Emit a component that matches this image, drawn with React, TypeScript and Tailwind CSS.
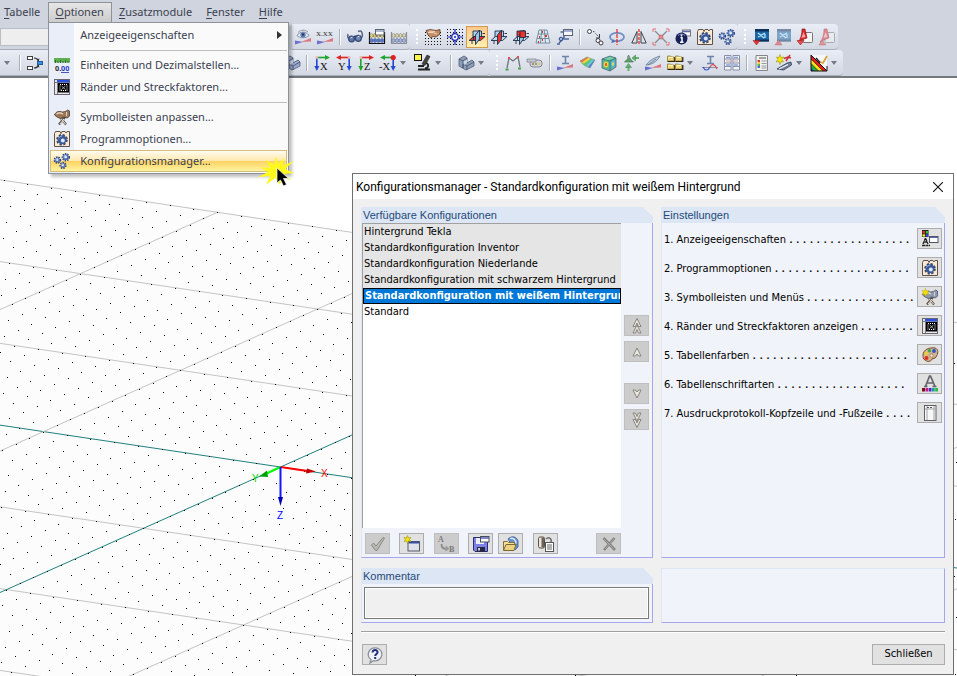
import type { ReactNode } from "react";

/* ---------- icon helpers ---------- */

function Icon({ children, className = "size-4" }: { children: ReactNode; className?: string }) {
  return (
    <svg viewBox="0 0 16 16" className={`shrink-0 overflow-visible ${className}`} fill="none" aria-hidden="true">
      {children}
    </svg>
  );
}

function Gear({ x, y, r, fill = "#4f70b5" }: { x: number; y: number; r: number; fill?: string }) {
  return (
    <g>
      <circle cx={x} cy={y} r={r} stroke="#2c447e" strokeWidth="2" strokeDasharray="1.4 .9" />
      <circle cx={x} cy={y} r={r - 0.3} fill={fill} />
      <circle cx={x - 0.4} cy={y - 0.5} r={r * 0.55} fill="#a9bfe8" />
      <circle cx={x} cy={y} r={r * 0.28} fill="#fff" />
    </g>
  );
}

const GearsIcon = () => (
  <Icon>
    <Gear x={3.4} y={7} r={2.8} />
    <Gear x={11.8} y={4.2} r={3.2} />
    <Gear x={9} y={12.4} r={2.6} />
  </Icon>
);

const ProgramIcon = () => (
  <Icon>
    <path d="M.5 15.500V2.500l1-2h4.500l1 2 1-2h3l1 1.500 1-1.500h2.500v15z" fill="#fbe9d2" stroke="#5d5148" />
    <circle cx="8" cy="8.800" r="4.800" stroke="#33466f" strokeWidth="2" strokeDasharray="2.200 1.570" />
    <circle cx="8" cy="8.800" r="4.500" fill="#3c5a98" />
    <path d="M4.500 7.500A4 4 0 018 5" stroke="#8fabdf" />
    <circle cx="8.800" cy="9.400" r="2" fill="#dbe7fa" />
  </Icon>
);

const MarginsIcon = () => (
  <Icon>
    <rect x=".5" y=".5" width="15" height="15" fill="#e8e8ea" stroke="#6a6570" />
    <rect x="3" y="1" width="12" height="2.500" fill="#2a50e0" />
    <path d="M1 3.500h2M3.500 3v12" stroke="#777" />
    <rect x="4" y="3.800" width="11" height="9.700" fill="#000" />
    <rect x="6" y="5.500" width="7" height="6" stroke="#fff" strokeDasharray="1 1" />
    <path d="M7.500 7l4 3.500M11.500 7l-4 3.500" stroke="#ccc" strokeWidth=".8" />
  </Icon>
);

const UnitsIcon = () => (
  <Icon>
    <rect x="0" y="1" width="16" height="4.500" fill="#5fae52" />
    <path d="M1.500 3v3M4 4v2M6.500 3v3M9 4v2M11.500 3v3M14 4v2" stroke="#2c6b2a" />
    <text x="1" y="14" fontSize="7.500" fontWeight="700" fontFamily="Liberation Sans, sans-serif" fill="#222">
      0.
    </text>
    <text x="7" y="14" fontSize="7.500" fontWeight="700" fontFamily="Liberation Sans, sans-serif" fill="#1f2fc0">
      00
    </text>
    <path d="M7 15.500h8" stroke="#1f2fc0" strokeWidth=".8" />
  </Icon>
);

const HammerIcon = ({ star = false }: { star?: boolean }) => (
  <Icon>
    <path d="M11 8l-6 7.500M6 8l6 7.500" stroke="#5d5045" strokeWidth="2.200" />
    <path d="M6.500 9l5 6M10 10l-4 5" stroke="#f1efe9" strokeWidth="1" />
    <path
      d="M.500 6c1.500-4 5-4 8-3 2 0 4-1 5-2l2 1v5l-2 2-4-1-3 1.500L3 8z"
      fill={star ? "#8d97ad" : "#9b7758"}
      stroke={star ? "#4c556c" : "#4c3a2c"}
      strokeWidth=".8"
    />
    <path d="M2.500 5c2-1.500 5-1 6.500 0" stroke={star ? "#dde2ee" : "#efe0cf"} strokeWidth="1.300" />
    <path d="M12.500 3v4" stroke="#d9d3cc" />
    {star && <path d="M3.500-.5l1 2.500 2.500-.5-1.500 2 1.500 2-2.500-.5-1 2.500-1-2.500-2.500.5 1.500-2-1.500-2 2.500.5z" fill="#f6e100" stroke="#a39500" strokeWidth=".4" />}
  </Icon>
);

const Wedge = () => (
  <>
    <path d="M0 15.500v-4l8 1.500z" fill="#6b6fd0" />
    <path d="M16 9v3.500L6 13z" fill="#dd7780" />
  </>
);

const EyeIcon = () => (
  <Icon>
    <Wedge />
    <path d="M2 6.500C5 2 11 2 14 6.500 11 9.500 5 9.500 2 6.500z" fill="#e5ecf6" stroke="#7585a5" strokeWidth=".9" />
    <circle cx="8" cy="5.800" r="2.600" fill="#5677a8" />
    <circle cx="8" cy="5.600" r="1" fill="#1e2c4a" />
    <path d="M3 3.500C6 .5 10 .5 13 3" stroke="#8f98aa" />
  </Icon>
);

const DecimalsIcon = () => (
  <Icon>
    <Wedge />
    <text x="-1" y="7" fontSize="7" fontWeight="700" fontFamily="Liberation Serif, serif" fill="#555">
      X.XX
    </text>
  </Icon>
);

const GlassesIcon = () => (
  <Icon>
    <path d="M1 5c-1 3 0 4 1 5M11 2.500c4-2 5 2 4 6" stroke="#59657f" strokeWidth="1.500" />
    <circle cx="4.500" cy="10" r="2.900" fill="#5f79ad" stroke="#3a4c77" strokeWidth="1.300" />
    <circle cx="11.300" cy="9.300" r="3" fill="#6d86b8" stroke="#3a4c77" strokeWidth="1.300" />
    <path d="M7 8c1-1 1-1 2-.5" stroke="#2b3d68" strokeWidth="1.500" />
    <path d="M3.500 9l2-1M10.500 8l2-1" stroke="#d9e4f7" />
  </Icon>
);

const AbacusIcon = ({ active = false }: { active?: boolean }) => (
  <Icon>
    <path d="M.5 3v12M15.500 3v12M0 14.500h16M.5 7h15" stroke={active ? "#111" : "#8a8f98"} strokeWidth="1.200" />
    {[2.5, 6, 9.5, 13].map((x) => (
      <g key={x}>
        <ellipse cx={x} cy="6.500" rx="1.500" ry="2" fill={active ? "#e9d984" : "#dcd8c0"} stroke="#77704a" strokeWidth=".5" />
        <ellipse cx={x} cy="11.500" rx="1.700" ry="2" fill={active ? "#5b77c4" : "#a8b5d3"} stroke="#4b5d8c" strokeWidth=".5" />
      </g>
    ))}
    {active && (
      <>
        <rect x="6.500" y=".5" width="8.500" height="5.500" fill="#fff" stroke="#5d6070" />
        <path d="M7 2h8" stroke="#5b6f9f" />
      </>
    )}
  </Icon>
);

const DotField = ({ from = 0 }: { from?: number }) => (
  <g fill="#111">
    {[0, 1, 2, 3, 4, 5].filter((r) => r >= from).map((r) =>
      [0, 1, 2, 3, 4, 5].map((c) => <rect key={`${r}-${c}`} x={c * 3} y={r * 3} width="1" height="1" />),
    )}
  </g>
);

const HandGridIcon = () => (
  <Icon>
    <DotField from={1} />
    <path d="M1 1.500l4-1 6 1 4-1V5l-4 3-3-.5L6 9 3 6z" fill="#c48f68" stroke="#5c3b27" strokeWidth=".8" />
    <path d="M3 3.500h5l4 1.500M4 2l6 .5" stroke="#f3d5bb" />
  </Icon>
);

const SnapIcon = () => (
  <Icon>
    <DotField />
    <path d="M8 0v16M0 8h16" stroke="#1b27b4" strokeWidth="1.200" />
    <circle cx="8" cy="8" r="3.300" fill="#eef2ff" stroke="#1b27b4" strokeWidth="1.300" />
    <circle cx="8" cy="8" r="1" fill="#1b27b4" />
  </Icon>
);

const PlaneIcon = ({ plane }: { plane: "xy" | "yz" | "xz" }) => {
  const red = "#f0302a";
  return (
    <Icon>
      <g stroke="#1d2f47" strokeWidth=".9" strokeLinejoin="round">
        <path d="M4 2h8.500v7.500H4z" fill={plane === "xz" ? red : "#a9d0ec"} />
        <path d="M0 11.500l4.500-4H16l-4.500 4z" fill={plane === "xy" ? red : "#bfdcf1"} />
        <path d="M6.500 6l4-5v9l-4 5.500z" fill={plane === "yz" ? red : "#9cc6e6"} />
        {plane === "xz" && <path d="M7 2h5.500v6.500H7z" fill={red} />}
        {plane !== "yz" && <path d="M4.500 11.500v-4h2v4z" fill={plane === "xy" ? red : "#d7eaf8"} />}
        <path d="M3 15v-3.500M13.500 4.500H16" />
      </g>
    </Icon>
  );
};

const MeshIcon = () => (
  <Icon>
    <path d="M4 1h8l3 13H1z" fill="#dceaf1" />
    <path d="M4 1h8M3 5h10M2 9.500h12M1 14h14M4 1L1 14M6.700 1L5.500 14M9.300 1l1.200 13M12 1l3 13" stroke="#5d7c90" strokeWidth=".8" />
    <path d="M7 3h1M4 8h1M10 7h2M7 11h1M3 13h1" stroke="#e62b2b" strokeWidth="1.800" />
  </Icon>
);

const WindowAxisIcon = () => (
  <Icon>
    <path d="M2 14L7 9M0 15h3M7 9V2M7 3H3.500M7 10h5" stroke="#4d6899" strokeWidth="1.600" />
    <rect x="6.500" y=".5" width="9" height="6" fill="#f5f7fc" stroke="#5d6070" />
    <path d="M7 2h8" stroke="#8797c4" strokeWidth="1.500" />
    <circle cx="4" cy="10" r="1.800" fill="#9fb6de" stroke="#33508b" />
  </Icon>
);

const CopyNodesIcon = () => (
  <Icon>
    <g stroke="#3c3c40">
      <circle cx="2.500" cy="2.500" r="2" fill="#fff" />
      <circle cx="11" cy="11.500" r="2" fill="#fff" />
      <circle cx="14" cy="14" r="2" fill="#fff" />
      <path d="M6 2.500l2 .5M8.500 4.500l3 3" strokeDasharray="1.500 1" />
      <path d="M12.500 5v4h-3.500" />
    </g>
  </Icon>
);

const RotateIcon = () => (
  <Icon>
    <ellipse cx="8" cy="8" rx="7" ry="4.200" stroke="#6f8fc4" strokeWidth="1.800" />
    <path d="M2 14l2-3.500 2 2.500z" fill="#4a6db0" />
    <path d="M8 0v16" stroke="#e8251f" strokeDasharray="4 1" strokeWidth="1.200" />
  </Icon>
);

const MirrorIcon = () => (
  <Icon>
    <path d="M6 2.500v11.500H.8zM10 2.500v11.500h5.200z" fill="#dfe3e8" stroke="#3f4248" />
    <path d="M8 0v16" stroke="#e8251f" strokeDasharray="3 1" strokeWidth="1.200" />
  </Icon>
);

const CrossNodesIcon = () => (
  <Icon>
    <path d="M2 2l12 12M14 2L2 14" stroke="#8a8b92" strokeWidth="1.300" />
    <path d="M0 3V0h3M13 0h3v3M0 13v3h3M13 16h3v-3" stroke="#e86868" />
    <circle cx="8" cy="8" r="2" fill="#ec8d8d" stroke="#c04b4b" strokeWidth=".6" />
  </Icon>
);

const InfoIcon = () => (
  <Icon>
    <rect x="7.500" y="1" width="8" height="6" fill="#f7f7f9" stroke="#777" />
    <path d="M8 2.500h7" stroke="#5c6cb2" strokeWidth="1.500" />
    <circle cx="6.500" cy="9.500" r="6" fill="#18205a" />
    <path d="M3 6.500a5 5 0 017 0" stroke="#8c93cf" />
    <path d="M6.500 5.500v2M5.500 8.800h1.500V13M5 13.200h3.500" stroke="#fff" strokeWidth="1.500" />
  </Icon>
);

const ExportIcon = ({ muted = false, doc = false }: { muted?: boolean; doc?: boolean }) => (
  <Icon>
    <g opacity={muted ? 0.5 : 1}>
      {doc ? (
        <>
          <rect x="6" y="3.500" width="9.500" height="10" rx="1" fill="#f3f3f3" stroke="#777" />
          <path d="M5 0h3l2 9-3 1-6 3c3-3 4-8 4-13z" fill="#e4252b" stroke="#7a0e12" strokeWidth=".6" />
          <path d="M6.500 3l-2 6 4-1z" fill="#f7a9a9" />
          <path d={muted ? "M0 16l3-5 4 5z" : "M0 11.500h7L3.500 16z"} fill="#f04848" stroke="#8a1d1d" strokeWidth=".5" />
        </>
      ) : (
        <>
          <rect x="2" y="0" width="14" height="12.500" fill="#1c66a6" />
          <path d="M2 0h14v2.500H2zM2 10.500h14v2H2z" fill="#0d2f58" />
          <path d="M5 4l6 5M5 8l7-4M12 9V5" stroke="#b5e6fa" strokeWidth="1.300" />
          <path d={muted ? "M0 16l3.500-5L7 16z" : "M0 11.500h7L3.500 16z"} fill="#e33434" stroke="#8a1d1d" strokeWidth=".5" />
        </>
      )}
    </g>
  </Icon>
);

const TreeIcon = () => (
  <Icon>
    <rect x=".5" y="1.500" width="5" height="3" fill="#fff" stroke="#444" />
    <rect x=".5" y="11.500" width="5" height="3" fill="#fff" stroke="#444" />
    <path d="M7 3c4 0 4 2 4.500 3M7 13c4 0 4-2 4.500-3" stroke="#333" strokeWidth="1.200" />
    <path d="M9.500 4.500l2 2 1-3zM9.500 11.500l2-2 1 3z" fill="#333" />
    <rect x="10.500" y="6.500" width="5" height="3" fill="#3c8ddb" stroke="#235b98" />
  </Icon>
);

const SolidIcon = ({ tint = "#8ea0b8" }: { tint?: string }) => (
  <Icon>
    <path d="M1 4l5-3 3 2v5l5-3 2 2v4l-8 4-7-4z" fill={tint} stroke="#4c5a70" strokeWidth=".8" />
    <path d="M1 4l4 2v7M5 6l4-3M5 13V9l4 2 7-4M9 11v4" stroke="#43506a" strokeWidth=".8" />
    <path d="M5.500 6.500L9 4.500V8l-3 2z" fill="#cdd8e6" />
  </Icon>
);

function AxisIcon({ label, bar, leg, flip = false, dot = false }: { label: string; bar: string; leg: string; flip?: boolean; dot?: boolean }) {
  return (
    <Icon>
      <g transform={flip ? "matrix(-1 0 0 1 16 0)" : undefined}>
        <path d="M3 2.500h9" stroke={bar} strokeWidth="1.600" />
        <path d="M11 0l5 2.500L11 5z" fill={bar} />
        <path d="M2.800 2.500v9" stroke={leg} strokeWidth="1.600" />
        <path d="M.3 11h5l-2.500 5z" fill={leg} />
        <circle cx="2.800" cy="2.500" r={dot ? 2.6 : 1.4} fill={dot ? "#e01e24" : "#f3b8b8"} />
      </g>
      <text x={flip ? (dot ? -1 : 2) : 6} y="15" fontSize="10.500" fontFamily="Liberation Serif, serif" fill="#111">
        {label}
      </text>
    </Icon>
  );
}

const MicroscopeIcon = () => (
  <Icon>
    <path d="M12 0l3 1.500-5 9-3-1.500z" fill="#444" stroke="#222" strokeWidth=".6" />
    <path d="M11 8c3 1 3 5-1 5.500M3 14.500h12M3 11h6" stroke="#222" strokeWidth="1.800" />
    <rect x="-.5" y="-.5" width="7" height="6" fill="#fcf64a" stroke="#111" />
  </Icon>
);

const FrameIcon = () => (
  <Icon>
    <path d="M2 13L4 3l4 3 5-4 2 10" stroke="#72767f" strokeWidth="1.300" />
    <path d="M3 3h2M12 2h2" stroke="#e84d4d" strokeWidth="2" />
    <path d="M.5 14.500h3M13 13.500h3" stroke="#48a348" strokeWidth="1.800" />
  </Icon>
);

const RollerIcon = () => (
  <Icon>
    <rect x="3" y="5" width="12" height="7" rx="3" fill="#d0d2d8" stroke="#85878f" />
    <path d="M0 4h9v3H0z" fill="#c9cbd2" stroke="#7d7f88" strokeWidth=".7" />
    <path d="M5 9h2" stroke="#dc5555" strokeWidth="1.600" />
    <path d="M8 9h2" stroke="#58a958" strokeWidth="1.600" />
    <path d="M11 9h2" stroke="#e5c748" strokeWidth="1.600" />
  </Icon>
);

const BeamIcon = ({ curve = false }: { curve?: boolean }) => (
  <Icon>
    <path d="M5 1.500h7M5 8.500h7M8.500 1.500v7" stroke="#6f83a8" strokeWidth="1.600" />
    {curve ? (
      <>
        <path d="M0 12.500h16" stroke="#8a90a0" />
        <path d="M1 12c2 4 5 4 7 0" stroke="#3553d0" strokeWidth="1.200" />
        <path d="M8 12c2-4 5-3 7 2" stroke="#d94b55" strokeWidth="1.200" />
      </>
    ) : (
      <Wedge />
    )}
  </Icon>
);

const ShellIcon = () => (
  <Icon>
    <path d="M1 6l7-4 8 3-5 8c-4-1-7-3-10-7z" fill="#5fc66a" />
    <path d="M1 6l7-4 4 1.500L5 8.500 3 8z" fill="#f0d545" />
    <path d="M1 6l7-4 1.500.5L3 7.500z" fill="#e6704c" />
    <path d="M9 12l6-6.500 1-.5-5 8z" fill="#5872d8" />
    <path d="M7 11l6-6.800 2 .8-6 7z" fill="#63c8e0" />
    <path d="M1 6l7-4 8 3-5 8c-4-1-7-3-10-7z" stroke="#8b9099" strokeWidth=".5" />
  </Icon>
);

const CubeIcon = () => (
  <Icon>
    <path d="M1 4l8-3 6 2v9l-6 4-8-3z" fill="#58b0a4" stroke="#4c6a7a" strokeWidth=".8" />
    <path d="M1 4l8 2 6-3M9 6v10" stroke="#3d6d70" strokeWidth=".8" />
    <ellipse cx="5" cy="9.500" rx="3" ry="3.700" fill="#66c456" />
    <ellipse cx="5" cy="9.500" rx="2.200" ry="2.800" fill="#e9e14a" />
    <ellipse cx="5" cy="9.500" rx="1.200" ry="1.700" fill="#e8543c" />
    <ellipse cx="12" cy="9" rx="2" ry="3.400" fill="#56b9e0" />
    <ellipse cx="12" cy="9" rx="1" ry="1.700" fill="#f0e04a" />
    <path d="M3 4l6-2 4 1-5 2z" fill="#7cd4a4" />
  </Icon>
);

const SupportIcon = () => (
  <Icon>
    <path d="M5.500 0l2 4 3 3h-9l3-3z" fill="#5a9e68" stroke="#39744a" strokeWidth=".6" />
    <path d="M16 3h-4M5.500 16v-4" stroke="#62b46c" strokeWidth="2" />
    <path d="M12.500 0v6L9 3z" fill="#62b46c" stroke="#3c8048" strokeWidth=".5" />
    <path d="M2.500 12.500h6l-3-4z" fill="#62b46c" stroke="#3c8048" strokeWidth=".5" />
    <circle cx="5.500" cy="2" r="1.500" fill="#8a9a90" />
  </Icon>
);

const FeatherIcon = () => (
  <Icon>
    <Wedge />
    <path d="M1 10C5 5 9 3 15 1c-2 4-6 8-13 9z" fill="#b9cce0" stroke="#66788f" strokeWidth=".8" />
    <path d="M3 10l8-6" stroke="#5b6f8a" strokeWidth=".7" />
  </Icon>
);

const PanelsIcon = () => (
  <Icon>
    {[
      [0.5, 1],
      [8.5, 1],
      [0.5, 9],
      [8.5, 9],
    ].map(([x, y]) => (
      <g key={`${x}${y}`}>
        <path d={`M${x} ${y}h3l1 1h2.500v4h-6.500z`} fill="#efd778" stroke="#8f7a30" strokeWidth=".8" />
        <path d={`M${x + 1} ${y + 1.500}h4.500`} stroke="#fff6c9" />
        <path d={`M${x} ${y + 5.500}h7.300V${y + 1}`} stroke="#2b2413" strokeWidth="1.200" />
      </g>
    ))}
  </Icon>
);

const TablesIcon = () => (
  <Icon>
    <path d="M.5.500h6.500v14.500H.500zM9 .5h6.500v14.500H9z" fill="#f3f5fa" stroke="#8890a5" />
    <path d="M1 4h6M1 8h6M1 11.500h6M9 4h6M9 8h6M9 11.500h6" stroke="#8890a5" />
    <path d="M2 2.500h4M10 2.500h4M2 10h4M10 10h4" stroke="#88a0df" strokeWidth="1.300" />
    <path d="M2 6h4M10 6h4" stroke="#e39a9a" />
  </Icon>
);

const ReportIcon = () => (
  <Icon>
    <path d="M2 .5h11.500v15H2z" fill="#f1f1ee" stroke="#84848a" />
    <path d="M5 3h7" stroke="#555" />
    <path d="M3.500 6h2.500" stroke="#d83c3c" strokeWidth="2" />
    <path d="M3.500 8h2.500" stroke="#e7cf3c" strokeWidth="2" />
    <path d="M3.500 10h2.500" stroke="#54b154" strokeWidth="2" />
    <path d="M3.500 12h2.500" stroke="#4a6ad8" strokeWidth="2" />
    <path d="M7.500 6h5M7.500 8.500h5M7.500 11h5M7.500 13h5" stroke="#9a9aa0" />
  </Icon>
);

const WandIcon = () => (
  <Icon>
    <path d="M1 14l10-6 4-1 .5 3-8 5z" fill="#74829e" stroke="#313b52" strokeWidth=".8" />
    <path d="M3 14l9-4.500" stroke="#eef2f8" strokeWidth="1.300" />
    <path d="M8 3.500l4-1.500 3 1M10 6l4-6" stroke="#c73333" strokeWidth="1.500" />
    <path d="M4-.5l1 3 3-.5-2 2.500 1.500 2.500-2.500-.5-1 3-1-3L0 7l2-2.500L.5 2 3 2.500z" fill="#f9e800" stroke="#8d8200" strokeWidth=".5" />
  </Icon>
);

const RainbowIcon = () => (
  <Icon>
    <path d="M0 0h16v16H0z" fill="#f7f7f7" />
    <path d="M0 0l16 16H0z" fill="#e81c1c" />
    <path d="M0 4l12 12H0z" fill="#f6e21a" />
    <path d="M0 8.500L7.500 16H0z" fill="#24a93a" />
    <path d="M0 13l3 3H0z" fill="#153fc4" />
    <path d="M0 0v16h16V11M0 0l16 16" stroke="#111" />
    <path d="M0 4l12 12M0 8.500L7.500 16" stroke="#111" strokeWidth=".6" />
    <path d="M9 7l3 1 4-7" stroke="#d9a23a" strokeWidth="1.800" />
    <path d="M9 7.500L5 3" stroke="#111" strokeWidth="1.300" />
  </Icon>
);

/* ---------- dialog icons ---------- */

const CheckIcon = () => (
  <Icon>
    <path d="M1.500 9l2-2 2.500 3L13 1.500l1.500.5L7 14.500 5 14z" fill="#b9b9b4" stroke="#8b8b86" />
  </Icon>
);

const NewIcon = () => (
  <Icon>
    <rect x="4" y="5.500" width="11.500" height="9.500" fill="#dfe2e9" stroke="#555b66" />
    <path d="M4.500 6.500h10.500" stroke="#364fa0" strokeWidth="2" />
    <path d="M3.500-.5l1 2.500 2.500-.5-1.500 2 1.500 2-2.500-.5-1 2.500-1-2.500-2.500.5 1.500-2-1.500-2 2.500.5z" fill="#f6e500" stroke="#8f8200" strokeWidth=".5" />
  </Icon>
);

const RenameIcon = () => (
  <Icon>
    <text x="-1" y="6" fontSize="8" fontWeight="700" fontFamily="Liberation Serif, serif" fill="#7d7d7d">
      A
    </text>
    <path d="M2.500 8c0 4 2 5 5 5" stroke="#8b8b8b" strokeWidth="1.800" />
    <path d="M6.500 9.500l4 3.300-4 2.700z" fill="#999" />
    <text x="10" y="16" fontSize="8" fontWeight="700" fontFamily="Liberation Serif, serif" fill="#777">
      B
    </text>
  </Icon>
);

const SaveIcon = () => (
  <Icon>
    <path d="M.5 1.500h14V15.500H2L.5 14z" fill="#7d80e6" stroke="#2b2d6b" />
    <rect x="3" y="2" width="8" height="6" fill="#eceef8" />
    <rect x="4" y="11" width="8" height="4.500" fill="#24273f" />
    <path d="M6 12v2.500" stroke="#dde" strokeWidth="1.800" />
    <rect x="7.500" y=".5" width="8.500" height="5.500" fill="#fff" stroke="#4a4d5d" />
    <path d="M8 2h8" stroke="#4f5fae" strokeWidth="1.500" />
  </Icon>
);

const OpenIcon = () => (
  <Icon>
    <path d="M5 3c4-4 9-2 10 2v6l-3 3z" fill="#6a94d4" stroke="#36548c" strokeWidth=".8" />
    <path d="M7 2.500c3-1 6 1 6 5" stroke="#dce9fc" strokeWidth="1.300" />
    <path d="M.5 14V5.500h4l1 1h6V9" fill="#f3df98" stroke="#857136" />
    <path d="M.5 14.500L3 8.500h10l-2 6z" fill="#ecd283" stroke="#7d6a30" />
  </Icon>
);

const PasteIcon = () => (
  <Icon>
    <rect x=".5" y="1" width="6" height="11" rx="1.500" fill="#e9e3da" stroke="#5a534a" />
    <path d="M3.500 1.500h2.500v10H3.500z" fill="#6d635a" />
    <path d="M8 3c3-3 6 0 5 3" stroke="#6a6a6a" strokeWidth="1.500" />
    <rect x="7.500" y="6.500" width="8" height="9" fill="#fff" stroke="#555" />
    <path d="M9 9h5M9 11h5M9 13h5" stroke="#666" />
  </Icon>
);

const DeleteIcon = () => (
  <Icon>
    <path d="M2.500 2L14 14M13.500 2L3 14" stroke="#84847f" strokeWidth="2.600" />
    <path d="M3 3l10 10M13 3L4 13" stroke="#aaa9a3" strokeWidth=".9" />
  </Icon>
);

const HelpIcon = () => (
  <Icon>
    <path d="M8 .8a6.800 6.500 0 11-1.500 12.800L3 16l1-3.500A6.800 6.500 0 018 .8z" fill="#eff2f8" stroke="#8c9098" strokeWidth="1.300" />
    <path d="M5.500 5.500c0-3.500 5.500-3 5 0-.3 1.500-2.300 1.500-2.300 3.500" stroke="#1e2f7d" strokeWidth="2" />
    <rect x="7.200" y="10" width="2" height="2" fill="#1e2f7d" />
  </Icon>
);

const DisplayPropsIcon = () => (
  <Icon>
    <rect x="0" y="-1" width="6.500" height="7" fill="#222" />
    <path d="M.5 0h2.500v2.500H.500z" fill="#f02828" />
    <path d="M3.800 0h2.400v2.500H3.800z" fill="#24c02c" />
    <path d="M.5 3.300h2.500v2.300H.500z" fill="#f4ee1c" />
    <path d="M3.800 3.300h2.400v2.300H3.800z" fill="#3848ee" />
    <path d="M1 13l2.500-6L6 13M2 11h3M0 14.500h8" stroke="#222" strokeWidth="1.300" strokeDasharray="3 .5" />
    <rect x="7.500" y="5.500" width="8.500" height="6" fill="#fff" stroke="#50546a" />
    <path d="M8 6.500h8" stroke="#5566b8" />
  </Icon>
);

const PaletteIcon = () => (
  <Icon>
    <path d="M1 8c0-5 6-8 12-7 4 1 3 6 1 9-1 2-3 1-4 2-1 3-5 3-7 1C1 12 1 10 1 8z" fill="#d8b48c" stroke="#6d4c30" />
    <circle cx="4.500" cy="11" r="2" fill="#e02a24" />
    <circle cx="4" cy="6.500" r="1.700" fill="#e8d22a" />
    <circle cx="7.500" cy="3.700" r="1.700" fill="#3aa648" />
    <circle cx="12" cy="4" r="1.900" fill="#2e50d2" />
    <circle cx="9.500" cy="8.500" r="1.600" fill="#f4f0ea" stroke="#7b5b3f" strokeWidth=".6" />
  </Icon>
);

const FontColorIcon = () => (
  <Icon>
    <path d="M3.500 10.500L7.500 0h1L13 10.500M5 7h6.500M2 10.500h3.500M10.500 10.500h4" stroke="#63656c" strokeWidth="1.700" />
    <path d="M0 12h3v3.500H0z" fill="#7c1018" />
    <path d="M3.500 12h2.800v3.500H3.500z" fill="#c01890" />
    <path d="M6.800 12h2.700v3.500H6.800z" fill="#4b28c8" />
    <path d="M10 12h2.700v3.500H10z" fill="#1c9a9a" />
    <path d="M13.200 12H16v3.500h-2.800z" fill="#28b848" />
  </Icon>
);

const PageIcon = () => (
  <Icon>
    <rect x="2.500" y=".5" width="11.500" height="15" fill="#f7f7f5" stroke="#5f6068" />
    <path d="M5 1v14M12 1v14M3 4h11" stroke="#a2a4aa" />
    <path d="M5 2.500h6" stroke="#55565e" strokeDasharray="2 1" />
  </Icon>
);

const Chevron = ({ double = false, down = false }: { double?: boolean; down?: boolean }) => (
  <Icon>
    <g transform={down ? "matrix(1 0 0 -1 0 16)" : undefined} fill="#e9e9e2" stroke="#85857d" strokeLinejoin="round">
      {double ? (
        <>
          <path d="M8 7l4 8H9.500L8 11.500 6.500 15H4z" />
          <path d="M8 .5l4 8H9.500L8 5 6.500 8.500H4z" />
        </>
      ) : (
        <path d="M8 4l4 8H9.500L8 10l-1.500 2H4z" />
      )}
    </g>
  </Icon>
);

/* ---------- tool bars ---------- */

type Tool = { label: string; icon: ReactNode; menu?: boolean; active?: boolean } | "sep";

function Caret() {
  return <span className="ml-1 border-x-[3px] border-t-4 border-x-transparent border-t-[#777b84]" />;
}

function ToolButton({ tool }: { tool: Tool }) {
  if (tool === "sep") {
    return <span className="mr-1 ml-[3px] h-4 w-px shrink-0 bg-[#a9afbd] shadow-[1px_0_0_#fff]" />;
  }
  return (
    <button
      type="button"
      aria-label={tool.label}
      className={`flex h-[22px] shrink-0 items-center ${tool.menu ? "w-[35px] pl-[3px]" : "w-[22px] justify-center"} ${
        tool.active ? "border border-[#d79a4c] bg-linear-to-b from-[#fbc98f] to-[#fff0b0]" : ""
      }`}
    >
      {tool.icon}
      {tool.menu && <Caret />}
    </button>
  );
}

function Band({ tools, grip = true, children }: { tools: Tool[]; grip?: boolean; children?: ReactNode }) {
  return (
    <div className="flex h-[26px] shrink-0 items-center rounded-r-sm border-b border-[#a7adb9] bg-linear-to-b from-[#e9edf6] to-[#d3d8e2]">
      {grip && <span className="mr-1 ml-1.5 h-[15px] border-l-2 border-dotted border-white" />}
      {children}
      {tools.map((tool, i) => (
        <ToolButton key={i} tool={tool} />
      ))}
    </div>
  );
}

const viewTools: Tool[] = [
  { label: "Ansicht", icon: <EyeIcon /> },
  { label: "Werte", icon: <DecimalsIcon /> },
  "sep",
  { label: "Suchen", icon: <GlassesIcon /> },
  { label: "Berechnen", icon: <AbacusIcon active /> },
  { label: "Ergebnisse", icon: <AbacusIcon /> },
];

const planeTools: Tool[] = [
  { label: "Raster", icon: <HandGridIcon /> },
  { label: "Fang", icon: <SnapIcon /> },
  { label: "Ebene XY", icon: <PlaneIcon plane="xy" />, active: true },
  { label: "Ebene YZ", icon: <PlaneIcon plane="yz" /> },
  { label: "Ebene XZ", icon: <PlaneIcon plane="xz" /> },
  { label: "Netz", icon: <MeshIcon /> },
  { label: "Koordinatensystem", icon: <WindowAxisIcon /> },
  "sep",
  { label: "Kopieren", icon: <CopyNodesIcon /> },
  { label: "Rotieren", icon: <RotateIcon /> },
  { label: "Spiegeln", icon: <MirrorIcon /> },
  { label: "Verbinden", icon: <CrossNodesIcon /> },
  { label: "Info", icon: <InfoIcon /> },
  { label: "Programmoptionen", icon: <ProgramIcon /> },
  { label: "Konfigurationsmanager", icon: <GearsIcon /> },
];

const exportTools: Tool[] = [
  { label: "Export", icon: <ExportIcon /> },
  { label: "Import", icon: <ExportIcon muted /> },
  { label: "PDF Export", icon: <ExportIcon doc /> },
  { label: "PDF Import", icon: <ExportIcon doc muted /> },
];

const axisTools: Tool[] = [
  { label: "Volumen", icon: <SolidIcon tint="#9aa8d0" /> },
  "sep",
  { label: "Ansicht X", icon: <AxisIcon label="X" bar="#1fa52e" leg="#2547d8" /> },
  { label: "Ansicht Y", icon: <AxisIcon label="Y" bar="#de2323" leg="#2547d8" flip /> },
  { label: "Ansicht Z", icon: <AxisIcon label="Z" bar="#de2323" leg="#1fa52e" /> },
  { label: "Ansicht -X", icon: <AxisIcon label="-X" bar="#1fa52e" leg="#2547d8" flip dot />, menu: true },
  { label: "Darstellung", icon: <MicroscopeIcon />, menu: true },
  "sep",
  { label: "Modell", icon: <SolidIcon />, menu: true },
];

const resultTools: Tool[] = [
  { label: "Verformung", icon: <FrameIcon /> },
  { label: "Bereich", icon: <RollerIcon /> },
  "sep",
  { label: "Stäbe", icon: <BeamIcon /> },
  { label: "Flächen", icon: <ShellIcon /> },
  { label: "Volumenkörper", icon: <CubeIcon /> },
  { label: "Lager", icon: <SupportIcon /> },
  { label: "Schnitt", icon: <FeatherIcon /> },
  { label: "Fenster anordnen", icon: <PanelsIcon />, menu: true },
  { label: "Verlauf", icon: <BeamIcon curve /> },
  { label: "Tabellen", icon: <TablesIcon /> },
  "sep",
  { label: "Protokoll", icon: <ReportIcon /> },
  { label: "Assistent", icon: <WandIcon />, menu: true },
  { label: "Farbskala", icon: <RainbowIcon />, menu: true },
];

/* ---------- menu ---------- */

type Entry = { label: string; icon?: ReactNode; sub?: boolean; active?: boolean } | "rule";

const entries: Entry[] = [
  { label: "Anzeigeeigenschaften", sub: true },
  "rule",
  { label: "Einheiten und Dezimalstellen...", icon: <UnitsIcon /> },
  { label: "Ränder und Streckfaktoren...", icon: <MarginsIcon /> },
  "rule",
  { label: "Symbolleisten anpassen...", icon: <HammerIcon /> },
  { label: "Programmoptionen...", icon: <ProgramIcon /> },
  { label: "Konfigurationsmanager...", icon: <GearsIcon />, active: true },
];

function OptionsMenu() {
  return (
    <div
      role="menu"
      className="absolute top-full -left-px z-20 w-[241px] border border-[#8d929b] bg-[#fafafa] bg-linear-to-r from-[#e9eef8] from-[25px] to-[#fafafa] to-[25px] p-px shadow-[3px_3px_3px_#00000040]"
    >
      {entries.map((entry, i) =>
        entry === "rule" ? (
          <div key={i} className="flex h-2 items-center pl-[30px]">
            <span className="h-px grow bg-[#bdbdbd]" />
          </div>
        ) : (
          <button
            key={i}
            type="button"
            role="menuitem"
            className={`flex h-[22px] w-full items-center border text-left ${
              entry.active
                ? "border-[#d5bd7d] bg-[linear-gradient(#fffbee,#ffe9b0_48%,#ffd363_52%,#fff3a0)]"
                : "border-transparent"
            }`}
          >
            <span className="flex w-[29px] pl-[3px]">{entry.icon}</span>
            <span className="grow">{entry.label}</span>
            {entry.sub && <span className="mr-1 border-y-[4px] border-l-[5px] border-y-transparent border-l-[#333]" />}
          </button>
        ),
      )}
      <svg viewBox="0 0 40 34" className="pointer-events-none absolute -right-2 -bottom-4 h-[34px] w-10" aria-hidden="true">
        <path
          d="M20 1l2 8 6-6-2 8 12-5-9 8 9 4-10 1 7 6-9-2-2 7-5-7-9 7 4-9-12 1 10-5-8-5 10 1-4-8 8 5z"
          fill="#fdf91c"
        />
        <path d="M21 13v15l3.500-3 3 6 3-1.500-3-6h5z" fill="#000" stroke="#fff" strokeWidth=".7" />
      </svg>
    </div>
  );
}

const menus = [
  { key: "T", rest: "abelle", pad: "pr-[7px] pl-[3px]" },
  { key: "O", rest: "ptionen", pad: "pr-[7px] pl-1.5", open: true },
  { key: "Z", rest: "usatzmodule", pad: "pr-1.5 pl-1.5" },
  { key: "F", rest: "enster", pad: "px-1.5" },
  { key: "H", rest: "ilfe", pad: "px-1.5" },
];

/* ---------- model space ---------- */

const ORIGIN = [280.5, 467];
const U = [237, 35.4];
const V = [-137, 61.3];
const at = (i: number, j: number) => [ORIGIN[0] + i * U[0] + j * V[0], ORIGIN[1] + i * U[1] + j * V[1]];

const gridLines: { a: number[]; b: number[]; axis: boolean }[] = [];
for (let j = -3; j <= 5; j++) gridLines.push({ a: at(-8, j), b: at(8, j), axis: j === 0 });
for (let i = -5; i <= 5; i++) gridLines.push({ a: at(i, -3), b: at(i, 8), axis: i === 0 });

let dotPath = "";
for (let j = -30; j <= 60; j++) {
  for (let i = -60; i <= 60; i++) {
    const [x, y] = at(i / 10, j / 10);
    if (x > -1 && x < 1920 && y > 78 && y < 1200) dotPath += `M${Math.floor(x)} ${Math.round(y)}h1v1h-1z`;
  }
}
const floor = [at(-8, -3), at(8, -3), at(8, 8), at(-8, 8)].map((p) => p.join(",")).join(" ");

function Workspace() {
  return (
    <svg className="absolute inset-0 size-full" aria-hidden="true">
      <polygon points={floor} fill="#fcfcfc" />
      {gridLines.map(({ a, b, axis }, i) => (
        <line key={i} x1={a[0]} y1={a[1]} x2={b[0]} y2={b[1]} stroke={axis ? "#1f8080" : "#c4c4c4"} />
      ))}
      <path d={dotPath} fill="#000" shapeRendering="crispEdges" />
      <path d="M280.500 467l27 4" stroke="#f00" strokeWidth="2" />
      <path d="M307 468.500l9 3-10 2z" fill="#c00000" />
      <path d="M280.500 467l-15 7" stroke="#0f0" strokeWidth="2" />
      <path d="M267 470.500l-8 6 9 .5z" fill="#00a000" />
      <path d="M280.500 467v32" stroke="#1414ff" strokeWidth="2" />
      <path d="M278 497h5l-2.500 9z" fill="#0000b0" />
      <g fontSize="10" fontFamily="Liberation Sans, sans-serif">
        <text x="321" y="477" fill="#f00">X</text>
        <text x="252" y="482" fill="#0d0">Y</text>
        <text x="277" y="519" fill="#00f">Z</text>
      </g>
    </svg>
  );
}

/* ---------- dialog ---------- */

function IconButton({ label, icon, disabled = false, className = "" }: { label: string; icon: ReactNode; disabled?: boolean; className?: string }) {
  return (
    <button
      type="button"
      aria-label={label}
      disabled={disabled}
      className={`flex h-[21px] w-[25px] shrink-0 items-center justify-center border ${
        disabled ? "border-[#bfbfbf] bg-[#cccccc]" : "border-[#adadad] bg-[#e1e1e1]"
      } ${className}`}
    >
      {icon}
    </button>
  );
}

function Panel({ title, className = "", children }: { title?: string; className?: string; children?: ReactNode }) {
  return (
    <section className={`flex flex-col ${className}`}>
      {title && (
        <h2 className="h-4 bg-[#dce6f4] pl-0.5 font-['Liberation_Sans',sans-serif] text-[11px] leading-4 text-[#1f4a78] [clip-path:polygon(0_0,calc(100%-10px)_0,100%_10px,100%_100%,0_100%)]">
          {title}
        </h2>
      )}
      <div className={`grow border-r border-b border-l border-r-[#a6a6ee] border-b-[#a6a6ee] border-l-[#dce6f4] bg-[#f0f3f9] ${title ? "" : "border-t border-t-[#dce6f4]"}`}>
        {children}
      </div>
    </section>
  );
}

const configs = [
  "Hintergrund Tekla",
  "Standardkonfiguration Inventor",
  "Standardkonfiguration Niederlande",
  "Standardkonfiguration mit schwarzem Hintergrund",
  "Standardkonfiguration mit weißem Hintergrund",
  "Standard",
];

const settings = [
  { label: "1. Anzeigeeigenschaften", dots: 18, icon: <DisplayPropsIcon /> },
  { label: "2. Programmoptionen", dots: 20, icon: <ProgramIcon /> },
  { label: "3. Symbolleisten und Menüs", dots: 16, icon: <HammerIcon star /> },
  { label: "4. Ränder und Streckfaktoren anzeigen", dots: 8, icon: <MarginsIcon /> },
  { label: "5. Tabellenfarben", dots: 23, icon: <PaletteIcon /> },
  { label: "6. Tabellenschriftarten", dots: 19, icon: <FontColorIcon /> },
  { label: "7. Ausdruckprotokoll-Kopfzeile und -Fußzeile", dots: 4, icon: <PageIcon /> },
];

function ConfigDialog() {
  return (
    <div
      role="dialog"
      aria-labelledby="dialog-title"
      className="absolute top-[173px] right-[3px] left-[352px] z-10 border border-[#6f6f6f] bg-[#f0f0f0] font-['DejaVu_Sans_Condensed','DejaVu_Sans',sans-serif] text-[11px] text-black"
    >
      <header className="flex h-[25px] items-center justify-between bg-white pr-2.5 pl-[3px]">
        <h1 id="dialog-title" className="font-['Roboto',sans-serif] text-xs">
          Konfigurationsmanager - Standardkonfiguration mit weißem Hintergrund
        </h1>
        <button type="button" aria-label="Fenster schließen">
          <svg viewBox="0 0 10 10" className="size-2.5" aria-hidden="true">
            <path d="M0 0l10 10M10 0L0 10" stroke="#111" strokeWidth="1.100" />
          </svg>
        </button>
      </header>

      <div className="flex flex-col px-2 pt-2">
        <div className="flex gap-2">
          <Panel title="Verfügbare Konfigurationen" className="w-[292px]">
            <div className="flex">
              <ul className="h-[305px] w-[259px] shrink-0 overflow-hidden border-t border-l border-[#a0a0a0] bg-white">
                {configs.map((name, i) => (
                  <li key={name}>
                    <button
                      type="button"
                      className={`block h-4 w-full overflow-hidden pl-px text-left leading-[14px] whitespace-nowrap ${
                        i === 4
                          ? "border border-black bg-[#0078d7] font-bold text-white"
                          : i < 4
                            ? "bg-[#e5e5e5]"
                            : ""
                      }`}
                    >
                      {name}
                    </button>
                  </li>
                ))}
              </ul>
              <div className="flex flex-col gap-[5px] pt-[92px] pl-[3px]">
                <IconButton label="Ganz nach oben" disabled icon={<Chevron double />} />
                <IconButton label="Nach oben" disabled icon={<Chevron />} />
                <IconButton label="Nach unten" disabled icon={<Chevron down />} className="mt-4" />
                <IconButton label="Ganz nach unten" disabled icon={<Chevron double down />} />
              </div>
            </div>
            <div className="flex h-[29px] items-center pt-0.5 pr-[31px] pl-[3px]">
              <IconButton label="Anwenden" disabled icon={<CheckIcon />} />
              <IconButton label="Neu" icon={<NewIcon />} className="ml-[9px]" />
              <IconButton label="Umbenennen" disabled icon={<RenameIcon />} className="ml-2.5" />
              <IconButton label="Speichern" icon={<SaveIcon />} className="ml-[9px]" />
              <IconButton label="Öffnen" icon={<OpenIcon />} className="ml-[5px]" />
              <IconButton label="Kopieren" icon={<PasteIcon />} className="ml-2.5" />
              <IconButton label="Löschen" disabled icon={<DeleteIcon />} className="ml-auto" />
            </div>
          </Panel>

          <Panel title="Einstellungen" className="min-w-0 grow">
            <ul className="pt-px">
              {settings.map(({ label, dots, icon }) => (
                <li key={label} className="flex h-[29px] items-center justify-between pr-0.5 pl-0.5">
                  <span className="pt-[3px] whitespace-nowrap">
                    {label}{" "}
                    <span className="font-['Noto_Sans',sans-serif] text-[13px] leading-none">{". ".repeat(dots)}</span>
                  </span>
                  <IconButton label={label} icon={icon} />
                </li>
              ))}
            </ul>
          </Panel>
        </div>

        <div className="mt-2.5 flex gap-2">
          <Panel title="Kommentar" className="w-[292px]">
            <div className="py-[3px] pr-[3px] pl-0.5">
              <input
                type="text"
                aria-label="Kommentar"
                className="block h-8 w-full border border-[#7a7a7a] bg-[#f0f0f0] px-1 ring-1 ring-white outline-none ring-inset"
              />
            </div>
          </Panel>
          <Panel className="grow" />
        </div>

        <hr className="mt-2 border-t border-b border-t-[#a0a0a0] border-b-white" />

        <footer className="flex items-center justify-between pt-[11px] pb-[9px] pl-px">
          <IconButton label="Hilfe" icon={<HelpIcon />} />
          <button type="button" className="h-[21px] w-[73px] border border-[#adadad] bg-[#e1e1e1]">
            Schließen
          </button>
        </footer>
      </div>
    </div>
  );
}

export default function App() {
  return (
    <div className="relative min-h-screen overflow-hidden bg-white font-['Noto_Sans',sans-serif] text-[11px] text-[#3b4150]">
      <Workspace />
      <header className="relative border-b-2 border-[#74777b] bg-[#cfd4de]">
        <nav className="flex h-6 items-start pt-0.5">
          {menus.map(({ key, rest, pad, open }) => (
            <div
              key={key}
              className={`relative border border-b-0 ${open ? "border-[#8d929b] bg-linear-to-b from-[#e6e6e6] to-[#cccccc]" : "border-transparent"}`}
            >
              <button type="button" className={`h-[19px] ${pad}`}>
                <span className="underline underline-offset-2">{key}</span>
                {rest}
              </button>
              {open && <OptionsMenu />}
            </div>
          ))}
        </nav>
        <div className="flex">
          <div className="mr-[10px] flex h-[26px] w-[282px] items-center border-b border-[#a7adb9]">
            <input type="text" aria-label="Lastfall" className="h-[18px] w-full border border-[#b9bdc6] bg-[#eeeeee]" />
          </div>
          <Band tools={viewTools} grip={false} />
          <Band tools={planeTools} />
          <Band tools={exportTools} />
        </div>
        <div className="flex">
          <Band tools={axisTools} grip={false}>
            <button type="button" aria-label="Auswahl" className="flex h-[22px] w-4 items-center">
              <Caret />
            </button>
            <ToolButton tool="sep" />
            <ToolButton tool={{ label: "Struktur", icon: <TreeIcon /> }} />
            <span className="w-[235px]" />
          </Band>
          <Band tools={resultTools} />
        </div>
      </header>
      <ConfigDialog />
    </div>
  );
}
